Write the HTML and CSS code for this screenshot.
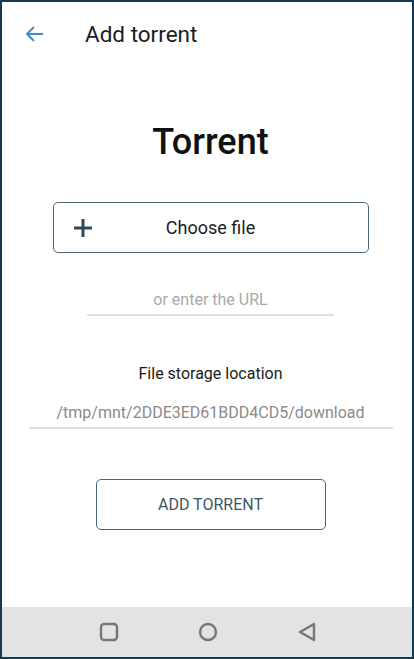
FILE: index.html
```html
<html>
<head>
<link rel="stylesheet" href="styles.css">
</head>
<body>
<div class="screen">
  <div class="toolbar">
    <svg class="back" width="20" height="18" viewBox="0 0 20 18"><path d="M19 9H3M10 2L3 9l7 7" fill="none" stroke="#3d8fd0" stroke-width="2"/></svg>
    <span class="title">Add torrent</span>
  </div>
  <div class="content">
    <h1>Torrent</h1>
    <button class="choose">
      <svg class="plus" width="20" height="20" viewBox="0 0 20 20"><path d="M10 1v18M1 10h18" stroke="#2f4a5a" stroke-width="3"/></svg>
      <span>Choose file</span>
    </button>
    <div class="url-field">or enter the URL</div>
    <div class="label">File storage location</div>
    <div class="path-field">/tmp/mnt/2DDE3ED61BDD4CD5/download</div>
    <button class="add">ADD TORRENT</button>
  </div>
  <div class="navbar">
    <svg width="20" height="20" viewBox="0 0 20 20"><rect x="2" y="2" width="16" height="16" rx="3" fill="none" stroke="#777" stroke-width="2.4"/></svg>
    <svg width="20" height="20" viewBox="0 0 20 20"><circle cx="10" cy="10" r="8" fill="none" stroke="#777" stroke-width="2.4"/></svg>
    <svg width="20" height="20" viewBox="0 0 20 20"><path d="M17 2v16L3 10z" fill="none" stroke="#777" stroke-width="2.4" stroke-linejoin="round"/></svg>
  </div>
</div>
</body>
</html>
```
FILE: styles.css
```css
body {
  margin: 0;
  font-family: Roboto, "Liberation Sans", sans-serif;
  color: #212121;
  background-color: #fff;
}

.screen {
  box-sizing: border-box;
  width: 414px;
  height: 659px;
  border: 2px solid #133a55;
  display: flex;
  flex-direction: column;
}

.toolbar {
  height: 62px;
  display: flex;
  align-items: center;
  padding-left: 22px;
}

.back {
  margin-right: 41px;
  margin-top: 1px;
}

.title {
  font-size: 22.5px;
  color: #1c1c1c;
  margin-top: 1px;
}

.content {
  flex: 1;
  display: flex;
  flex-direction: column;
  align-items: center;
  padding-left: 7px;
}

h1 {
  margin: 56px 0 0 0;
  font-size: 36px;
  font-weight: 500;
  line-height: 44px;
  color: #111;
}

.choose {
  margin-top: 38px;
  width: 316px;
  height: 51px;
  background: #fff;
  border: 1px solid #4b6778;
  border-radius: 5px;
  display: flex;
  align-items: center;
  padding: 0 0 0 19px;
  font-family: inherit;
  font-size: 18px;
  color: #1c1c1c;
  cursor: pointer;
}

.choose span {
  flex: 1;
  text-align: center;
  margin-right: 39px;
}

.url-field {
  margin-top: 37px;
  width: 247px;
  border-bottom: 2px solid #e0e0e0;
  text-align: center;
  font-size: 16px;
  color: #a8a8a8;
  padding-bottom: 5px;
}

.label {
  margin-top: 48px;
  font-size: 16px;
  color: #1c1c1c;
}

.path-field {
  margin-top: 20px;
  width: 364px;
  border-bottom: 2px solid #e0e0e0;
  text-align: center;
  font-size: 16px;
  color: #8a8a8a;
  padding-bottom: 5px;
}

.add {
  margin-top: 50px;
  width: 230px;
  height: 51px;
  background: #fff;
  border: 1px solid #4b6778;
  border-radius: 5px;
  font-family: inherit;
  font-size: 16px;
  color: #3b5666;
  cursor: pointer;
}

.navbar {
  height: 50px;
  background-color: #e3e3e3;
  display: flex;
  align-items: center;
  justify-content: center;
  gap: 79px;
  padding-left: 1px;
}
```
